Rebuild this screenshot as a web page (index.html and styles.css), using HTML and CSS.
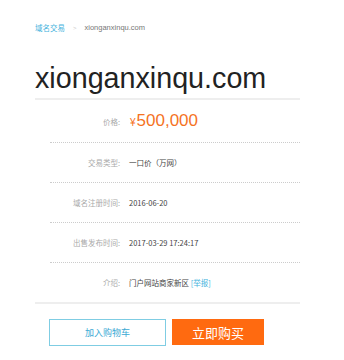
FILE: index.html
```html
<!DOCTYPE html>
<html>
<head>
<meta charset="utf-8">
<link rel="stylesheet" href="styles.css">
</head>
<body>
<div class="page">
  <div class="crumb"><span class="crumb-link">域名交易</span><span class="crumb-sep">&gt;</span><span class="crumb-cur">xionganxinqu.com</span></div>
  <h1 class="title">xionganxinqu.com</h1>
  <div class="details">
    <div class="row price-row"><span class="label">价格:</span><span class="value price"><span class="yen">¥</span>500,000</span></div>
    <div class="row"><span class="label">交易类型:</span><span class="value">一口价（万网）</span></div>
    <div class="row"><span class="label">域名注册时间:</span><span class="value">2016-06-20</span></div>
    <div class="row"><span class="label">出售发布时间:</span><span class="value">2017-03-29 17:24:17</span></div>
    <div class="row last"><span class="label">介绍:</span><span class="value">门户网站商家新区 <span class="report">[举报]</span></span></div>
  </div>
  <div class="actions">
    <button class="btn btn-cart">加入购物车</button>
    <button class="btn btn-buy">立即购买</button>
  </div>
</div>
</body>
</html>
```

FILE: styles.css
```css
html, body {
  margin: 0;
  padding: 0;
  background: #fff;
}
body {
  font-family: "Liberation Sans", "Noto Sans CJK SC", sans-serif;
  color: #555;
}
.page {
  width: 265px;
  margin-left: 35px;
  padding-top: 22px;
}
.crumb {
  font-size: 7.5px;
  height: 12px;
  line-height: 12px;
  display: flex;
  align-items: center;
}
.crumb-link {
  color: #45b3dd;
  font-family: "Noto Sans CJK SC", sans-serif;
}
.crumb-sep {
  color: #ccc;
  margin: 0 8px;
  font-size: 6px;
}
.crumb-cur {
  color: #777;
}
.title {
  margin: 28px 0 0 0;
  font-size: 28.7px;
  font-weight: normal;
  color: #222;
  line-height: 32px;
  height: 36px;
  border-bottom: 2px solid #eee;
}
.details {
  border-bottom: 2px solid #eee;
}
.row {
  display: flex;
  align-items: center;
  height: 39px;
  margin-left: 15px;
  border-bottom: 1px dotted #ccc;
  font-family: "Noto Sans CJK SC", sans-serif;
  font-size: 7.5px;
}
.row.price-row {
  height: 42px;
}
.row.last {
  border-bottom: none;
}
.label {
  width: 70px;
  text-align: right;
  color: #aaa;
  flex: none;
}
.value {
  margin-left: 9px;
  color: #444;
}
.price {
  color: #f5731f;
  font-family: "Liberation Sans", sans-serif;
  font-size: 17px;
  margin-left: 10px;
}
.yen {
  font-size: 10px;
  margin-right: 1px;
}
.report {
  color: #45b3dd;
}
.actions {
  display: flex;
  gap: 6px;
  margin-left: 14px;
  margin-top: 15px;
  align-items: flex-start;
}
.btn {
  font-family: "Noto Sans CJK SC", sans-serif;
  padding: 0;
  margin: 0;
  cursor: pointer;
}
.btn-cart {
  width: 117px;
  height: 27px;
  background: #fff;
  border: 1px solid #7fcde3;
  color: #3ba9d4;
  font-size: 9px;
}
.btn-buy {
  width: 92px;
  height: 26px;
  background: #ff6a10;
  border: none;
  color: #fff;
  font-size: 13px;
}
```
